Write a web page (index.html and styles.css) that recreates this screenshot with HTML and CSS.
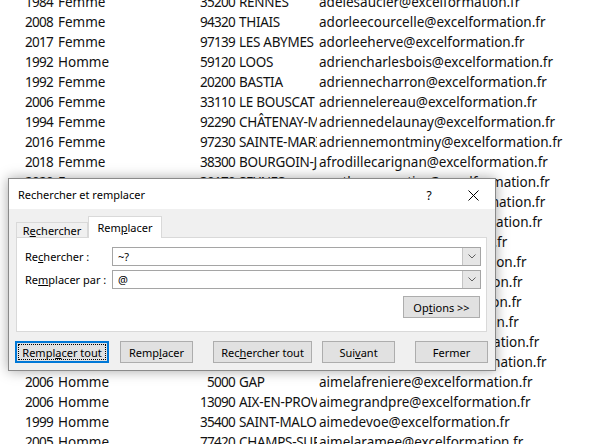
FILE: index.html
```html
<!DOCTYPE html>
<html lang="fr">
<head>
<meta charset="utf-8">
<title>Rechercher et remplacer</title>
<link rel="stylesheet" href="styles.css">
</head>
<body>
<div class="sheet">
  <div class="row"><div class="c num">1984</div><div class="c txt">Femme</div><div class="c num">35200</div><div class="c city">RENNES</div><div class="c mail">adelesaucier@excelformation.fr</div></div>
  <div class="row"><div class="c num">2008</div><div class="c txt">Femme</div><div class="c num">94320</div><div class="c city">THIAIS</div><div class="c mail">adorleecourcelle@excelformation.fr</div></div>
  <div class="row"><div class="c num">2017</div><div class="c txt">Femme</div><div class="c num">97139</div><div class="c city">LES ABYMES</div><div class="c mail">adorleeherve@excelformation.fr</div></div>
  <div class="row"><div class="c num">1992</div><div class="c txt">Homme</div><div class="c num">59120</div><div class="c city">LOOS</div><div class="c mail">adriencharlesbois@excelformation.fr</div></div>
  <div class="row"><div class="c num">1992</div><div class="c txt">Femme</div><div class="c num">20200</div><div class="c city">BASTIA</div><div class="c mail">adriennecharron@excelformation.fr</div></div>
  <div class="row"><div class="c num">2006</div><div class="c txt">Femme</div><div class="c num">33110</div><div class="c city">LE BOUSCAT</div><div class="c mail">adriennelereau@excelformation.fr</div></div>
  <div class="row"><div class="c num">1994</div><div class="c txt">Femme</div><div class="c num">92290</div><div class="c city">CHÂTENAY-MALABRY</div><div class="c mail">adriennedelaunay@excelformation.fr</div></div>
  <div class="row"><div class="c num">2016</div><div class="c txt">Femme</div><div class="c num">97230</div><div class="c city">SAINTE-MARIE</div><div class="c mail">adriennemontminy@excelformation.fr</div></div>
  <div class="row"><div class="c num">2018</div><div class="c txt">Femme</div><div class="c num">38300</div><div class="c city">BOURGOIN-JALLIEU</div><div class="c mail">afrodillecarignan@excelformation.fr</div></div>
  <div class="row"><div class="c num">2020</div><div class="c txt">Femme</div><div class="c num">30170</div><div class="c city">SEYNES</div><div class="c mail">agathecarpentier@excelformation.fr</div></div>
  <div class="row"><div class="c"></div><div class="c"></div><div class="c"></div><div class="c"></div><div class="c mail">agathebouchard@excelformation.fr</div></div>
  <div class="row"><div class="c"></div><div class="c"></div><div class="c"></div><div class="c"></div><div class="c mail">agathebrisebois@excelformation.fr</div></div>
  <div class="row"><div class="c"></div><div class="c"></div><div class="c"></div><div class="c"></div><div class="c mail">agathegay@excelformation.fr</div></div>
  <div class="row"><div class="c"></div><div class="c"></div><div class="c"></div><div class="c"></div><div class="c mail">agatheparent@excelformation.fr</div></div>
  <div class="row"><div class="c"></div><div class="c"></div><div class="c"></div><div class="c"></div><div class="c mail">agathemorin@excelformation.fr</div></div>
  <div class="row"><div class="c"></div><div class="c"></div><div class="c"></div><div class="c"></div><div class="c mail">agathelavoie@excelformation.fr</div></div>
  <div class="row"><div class="c"></div><div class="c"></div><div class="c"></div><div class="c"></div><div class="c mail">agatheleduc@excelformation.fr</div></div>
  <div class="row"><div class="c"></div><div class="c"></div><div class="c"></div><div class="c"></div><div class="c mail">agnesbouchard@excelformation.fr</div></div>
  <div class="row"><div class="c"></div><div class="c"></div><div class="c"></div><div class="c"></div><div class="c mail">aimebeauchamp@excelformation.fr</div></div>
  <div class="row"><div class="c num">2006</div><div class="c txt">Homme</div><div class="c num">5000</div><div class="c city">GAP</div><div class="c mail">aimelafreniere@excelformation.fr</div></div>
  <div class="row"><div class="c num">2006</div><div class="c txt">Homme</div><div class="c num">13090</div><div class="c city">AIX-EN-PROVENCE</div><div class="c mail">aimegrandpre@excelformation.fr</div></div>
  <div class="row"><div class="c num">1999</div><div class="c txt">Homme</div><div class="c num">35400</div><div class="c city">SAINT-MALO</div><div class="c mail">aimedevoe@excelformation.fr</div></div>
  <div class="row"><div class="c num">2005</div><div class="c txt">Homme</div><div class="c num">77420</div><div class="c city">CHAMPS-SUR-MARNE</div><div class="c mail">aimelaramee@excelformation.fr</div></div>
</div>

<div class="dialog">
  <div class="titlebar">
    <div class="title">Rechercher et remplacer</div>
    <div class="tb-btn help">?</div>
    <div class="tb-btn close">
      <svg width="11" height="11" viewBox="0 0 11 11"><path d="M0.5 0.5 L10.5 10.5 M10.5 0.5 L0.5 10.5" stroke="#000" stroke-width="1" fill="none"/></svg>
    </div>
  </div>
  <div class="body">
    <div class="tabs">
      <div class="tab">R<u>e</u>chercher</div>
      <div class="tab active">Rem<u>p</u>lacer</div>
    </div>
    <div class="panel">
      <div class="field">
        <div class="label">Re<u>c</u>hercher :</div>
        <div class="combo"><div class="val">~?</div><div class="drop"><svg width="8" height="5" viewBox="0 0 8 5"><path d="M0.5 0.5 L4 4 L7.5 0.5" stroke="#606060" stroke-width="1" fill="none"/></svg></div></div>
      </div>
      <div class="field">
        <div class="label">Re<u>m</u>placer par :</div>
        <div class="combo"><div class="val">@</div><div class="drop"><svg width="8" height="5" viewBox="0 0 8 5"><path d="M0.5 0.5 L4 4 L7.5 0.5" stroke="#606060" stroke-width="1" fill="none"/></svg></div></div>
      </div>
      <div class="opt-row"><div class="btn opt">Op<u>t</u>ions &gt;&gt;</div></div>
    </div>
    <div class="actions">
      <div class="btn focus w94">Rempl<u>a</u>cer tout</div>
      <div class="btn w73 g11">Remp<u>l</u>acer</div>
      <div class="btn w99 g20">Rec<u>h</u>ercher tout</div>
      <div class="btn w73 g10">Sui<u>v</u>ant</div>
      <div class="btn w73 g20">Fermer</div>
    </div>
  </div>
</div>
</body>
</html>
```
FILE: styles.css
```css
* { box-sizing: border-box; }
html, body { margin: 0; padding: 0; background: #fff; }
body {
  width: 613px; height: 444px; overflow: hidden; position: relative;
  font-family: "Noto Sans", "Liberation Sans", sans-serif;
}
.sheet { margin-top: -8px; font-size: 13.5px; color: #111; }
.row {
  display: grid;
  grid-template-columns: 55px 125px 57px 80px 1fr;
  height: 20px; line-height: 20px; white-space: nowrap;
}
.c { overflow: hidden; }
.num { text-align: right; padding-right: 2px; letter-spacing: -0.7px; }
.txt { padding-left: 3px; }
.city { padding-left: 2px; letter-spacing: -0.3px; }
.mail { padding-left: 2px; overflow: visible; }

.dialog {
  position: absolute; left: 8px; top: 178px; width: 488px; height: 193px;
  border: 1px solid #8a8a8a; background: #f0f0f0;
  box-shadow: 0 0 12px rgba(0,0,0,0.35);
  font-family: "Noto Sans", "Open Sans", sans-serif; font-size: 11px; color: #000;
  display: flex; flex-direction: column;
}
.titlebar {
  height: 30px; background: #fff; display: flex; align-items: center;
  padding-left: 9px; flex: none;
}
.title { flex: 1; font-size: 11px; }
.tb-btn { width: 44px; height: 30px; display: flex; align-items: center; justify-content: center; }
.help { font-size: 12px; padding-top: 2px; }
.close { padding-top: 2px; }
.body { flex: 1; display: flex; flex-direction: column; padding-top: 7px; }
.tabs {
  display: flex; align-items: flex-end; height: 21px; margin-left: 7px;
  position: relative; z-index: 1;
}
.tab {
  width: 72px; height: 15px; border: 1px solid #d9d9d9; border-bottom: none;
  background: #f0f0f0; display: flex; align-items: center; justify-content: center;
  line-height: 13px; padding-top: 1px;
}
.tab.active {
  width: 74px; height: 22px; background: #fff; margin-bottom: -1px;
  align-items: flex-start; padding-top: 4px;
}
.panel {
  margin: 0 8px 0 7px; height: 95px; background: #fff; border: 1px solid #d9d9d9;
  padding: 9px 5px 0 8px;
}
.field { display: flex; align-items: center; height: 19px; margin-bottom: 4px; }
.label { width: 87px; }
.combo {
  flex: 1; height: 19px; border: 1px solid #a5a5a5; display: flex; background: #fff;
}
.val { flex: 1; padding-left: 5px; line-height: 17px; }
.drop {
  width: 18px; background: #e6e6e6; border-left: 1px solid #c4c4c4;
  display: flex; align-items: center; justify-content: center;
}
.opt-row { display: flex; justify-content: flex-end; margin-top: 7px; padding-right: 1px; }
.btn {
  height: 22px; border: 1px solid #adadad; background: #e1e1e1;
  display: flex; align-items: center; justify-content: center; flex: none;
}
.opt { width: 77px; }
.actions { display: flex; margin-top: 9px; padding-left: 6px; }
.w94 { width: 94px; }
.w73 { width: 73px; }
.w99 { width: 99px; }
.g11 { margin-left: 11px; }
.g20 { margin-left: 20px; }
.g10 { margin-left: 10px; }
.focus {
  border: 2px solid #0078d7;
  outline: 1px dotted #000; outline-offset: -4px;
}
u { text-decoration-thickness: 1px; text-underline-offset: 1px; }
```
